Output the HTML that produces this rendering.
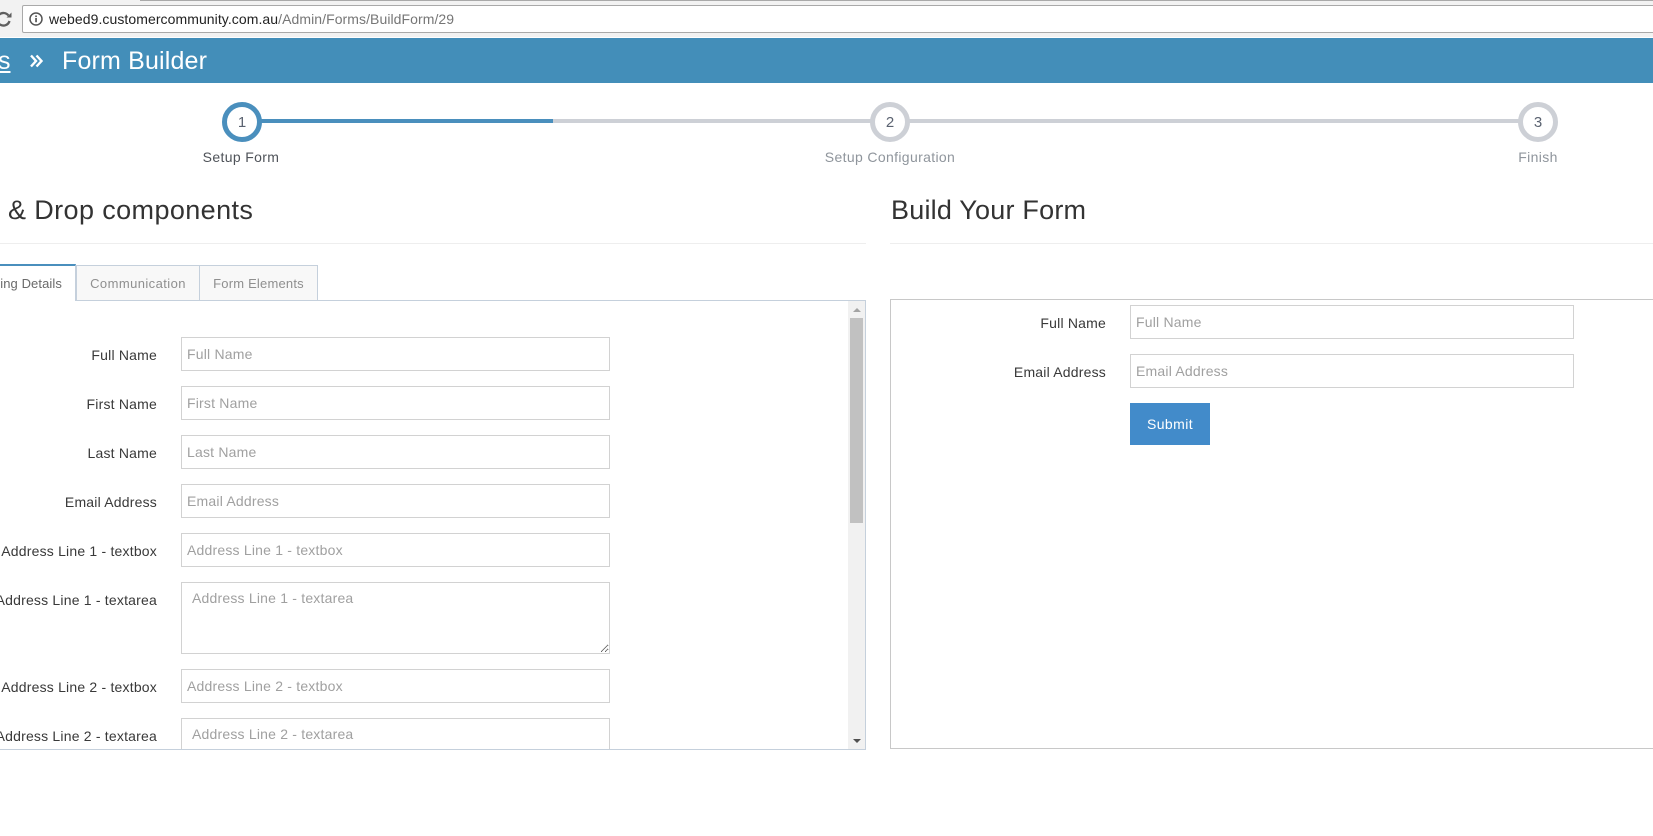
<!DOCTYPE html>
<html><head><meta charset="utf-8"><title>Form Builder</title>
<style>
html,body{margin:0;padding:0;width:1653px;height:836px;overflow:hidden;background:#fff}
body{position:relative;font-family:"Liberation Sans",sans-serif;font-size:14px;color:#393939}
.a{position:absolute;white-space:nowrap}
.lbl{position:absolute;right:0;white-space:nowrap;letter-spacing:.2px;line-height:20px;text-align:right}
input,textarea{position:absolute;box-sizing:border-box;margin:0;border:1px solid #d2d2d2;background:#fff;font:14px "Liberation Sans",sans-serif;letter-spacing:.2px;outline:0;border-radius:0;padding:0 5px;color:#393939}
input::placeholder,textarea::placeholder{color:#a0a0a0;opacity:1}
textarea{padding:7px 10px}
.step{position:absolute;box-sizing:border-box;width:40px;height:40px;top:102px;border-radius:50%;border:5px solid #cdd0d6;background:#fff;text-align:center;line-height:32px;font-size:15px;color:#5a6270}
.cap{position:absolute;top:148px;width:240px;text-align:center;line-height:18px;letter-spacing:.35px;color:#8f959c}
.tab{position:absolute;box-sizing:border-box;top:265px;height:36px;border:1px solid #c5d0dc;background:#f8f8f8;color:#8f8f8f;font-size:13px;letter-spacing:.42px;line-height:35px;text-align:center}
</style></head><body>

<div class="a" style="left:0;top:0;width:1653px;height:37px;background:#f2f2f2"></div>
<div class="a" style="left:140px;top:0;width:1513px;height:1px;background:#a9a9a9"></div>
<div class="a" style="left:22px;top:5px;width:1640px;height:28px;box-sizing:border-box;border:1px solid #a9a9a9;border-radius:2px;background:#fff"></div>
<svg class="a" style="left:0;top:8px" width="48" height="24" viewBox="0 0 48 24">
<path d="M8.500 7.500A6.300 6.300 0 1 0 9.500 13" fill="none" stroke="#5f5f5f" stroke-width="2.300"/>
<path d="M6.500 9.500h5V4.500z" fill="#5f5f5f"/>
<circle cx="36" cy="11" r="6" fill="none" stroke="#555" stroke-width="1.500"/>
<rect x="35.200" y="10" width="1.700" height="4.200" fill="#555"/>
<rect x="35.200" y="7.500" width="1.700" height="1.600" fill="#555"/>
</svg>
<div class="a" style="left:49px;top:11px;line-height:17px;font-size:14px;color:#222;letter-spacing:.07px">webed9.customercommunity.com.au<span style="color:#767676">/Admin/Forms/BuildForm/29</span></div>

<div class="a" style="left:0;top:38px;width:1653px;height:45px;background:#438eb9"></div>
<div class="a" style="left:-2px;top:46px;font-size:25px;line-height:30px;color:#fff;text-decoration:underline">s</div>
<svg class="a" style="left:28px;top:52px" width="18" height="18" viewBox="0 0 18 18">
<path d="M3 3.500L8 9L3 14.500M8.500 3.500L13.500 9L8.500 14.500" fill="none" stroke="#fff" stroke-width="2.400"/>
</svg>
<div class="a" style="left:62px;top:46px;font-size:25px;line-height:30px;color:#fff;letter-spacing:.17px">Form Builder</div>

<div class="a" style="left:241px;top:119px;width:1297px;height:4px;background:#cdd0d6"></div>
<div class="a" style="left:241px;top:119px;width:312px;height:4px;background:#4a8fbd"></div>
<div class="step" style="left:222px;border-color:#4a8fbd">1</div>
<div class="step" style="left:870px">2</div>
<div class="step" style="left:1518px">3</div>
<div class="cap" style="left:121px;color:#4f5359">Setup Form</div>
<div class="cap" style="left:770px">Setup Configuration</div>
<div class="cap" style="left:1418px">Finish</div>

<div class="a" style="left:8px;top:192px;font-size:27px;line-height:36px;color:#333;letter-spacing:.39px">&amp; Drop components</div>
<div class="a" style="left:891px;top:192px;font-size:27px;line-height:36px;color:#333;letter-spacing:.21px">Build Your Form</div>
<div class="a" style="left:0;top:243px;width:866px;height:1px;background:#eee"></div>
<div class="a" style="left:890px;top:243px;width:763px;height:1px;background:#eee"></div>

<div class="tab" style="left:76px;width:124px">Communication</div>
<div class="tab" style="left:199px;width:119px;letter-spacing:.2px">Form Elements</div>

<div class="a" style="left:-1px;top:300px;width:867px;height:450px;box-sizing:border-box;border:1px solid #c5d0dc;background:#fff;overflow:hidden"></div>
<div class="a" style="left:-10px;top:264px;width:86px;height:37px;box-sizing:border-box;border:1px solid #c5d0dc;border-top:2px solid #4a8fbd;border-bottom:0;background:#fff;font-size:13px;letter-spacing:.1px;line-height:36px;text-align:right;padding-right:13px;color:#6a6a6a;overflow:hidden">ing Details</div>

<div class="a" style="left:0;top:301px;width:865px;height:448px;overflow:hidden">
 <div class="lbl" style="right:708px;top:44px">Full Name</div>
 <input style="left:181px;top:36px;width:429px;height:34px" placeholder="Full Name">
 <div class="lbl" style="right:708px;top:93px">First Name</div>
 <input style="left:181px;top:85px;width:429px;height:34px" placeholder="First Name">
 <div class="lbl" style="right:708px;top:142px">Last Name</div>
 <input style="left:181px;top:134px;width:429px;height:34px" placeholder="Last Name">
 <div class="lbl" style="right:708px;top:191px">Email Address</div>
 <input style="left:181px;top:183px;width:429px;height:34px" placeholder="Email Address">
 <div class="lbl" style="right:708px;top:240px">Address Line 1 - textbox</div>
 <input style="left:181px;top:232px;width:429px;height:34px" placeholder="Address Line 1 - textbox">
 <div class="lbl" style="right:708px;top:289px">Address Line 1 - textarea</div>
 <textarea style="left:181px;top:281px;width:429px;height:72px" placeholder="Address Line 1 - textarea"></textarea>
 <div class="lbl" style="right:708px;top:376px">Address Line 2 - textbox</div>
 <input style="left:181px;top:368px;width:429px;height:34px" placeholder="Address Line 2 - textbox">
 <div class="lbl" style="right:708px;top:425px">Address Line 2 - textarea</div>
 <textarea style="left:181px;top:417px;width:429px;height:72px" placeholder="Address Line 2 - textarea"></textarea>
 <div class="a" style="left:848px;top:0;width:17px;height:448px;background:#f1f1f1"></div>
 <div class="a" style="left:850px;top:17px;width:13px;height:205px;background:#c1c1c1"></div>
 <div class="a" style="left:852.500px;top:7px;width:0;height:0;border-left:4px solid transparent;border-right:4px solid transparent;border-bottom:4px solid #a3a3a3"></div>
 <div class="a" style="left:852.500px;top:438px;width:0;height:0;border-left:4px solid transparent;border-right:4px solid transparent;border-top:4px solid #505050"></div>
</div>

<div class="a" style="left:890px;top:299px;width:780px;height:450px;box-sizing:border-box;border:1px solid #c8c8c8;background:#fff"></div>
<div class="lbl" style="right:547px;top:313px">Full Name</div>
<input style="left:1130px;top:305px;width:444px;height:34px" placeholder="Full Name">
<div class="lbl" style="right:547px;top:362px">Email Address</div>
<input style="left:1130px;top:354px;width:444px;height:34px" placeholder="Email Address">
<div class="a" style="left:1130px;top:403px;width:80px;height:42px;background:#428bca;color:#fff;text-align:center;line-height:42px;letter-spacing:.42px">Submit</div>

</body></html>
